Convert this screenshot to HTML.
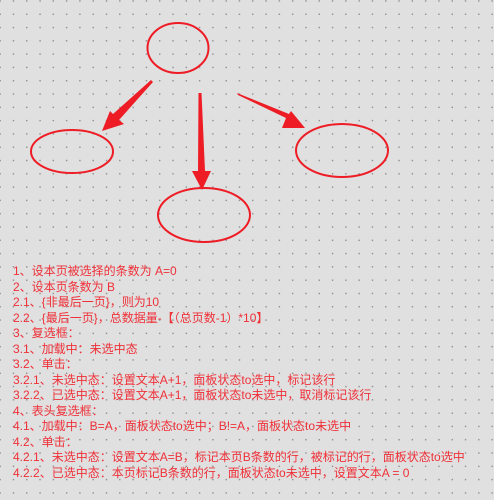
<!DOCTYPE html>
<html><head><meta charset="utf-8"><style>
html,body{margin:0;padding:0}
body{width:494px;height:500px;overflow:hidden;background-color:#e0e0e0;
background-image:radial-gradient(circle,#8a8a8a 0.6px,transparent 0.9px);
background-size:13.3px 13.3px;background-position:6.8px 7.6px;position:relative;
font-family:"Liberation Sans","Noto Sans CJK SC",sans-serif}
svg{position:absolute;left:0;top:0}
.t{position:absolute;left:13px;top:264px;color:#ef3038;font-size:12px;line-height:15.5px;white-space:nowrap}
</style></head><body>
<svg width="494" height="260" viewBox="0 0 494 260">
<g fill="none" stroke="#ee1c25" stroke-width="2">
<ellipse cx="178" cy="48" rx="30.5" ry="25"/>
<ellipse cx="72" cy="151.5" rx="41" ry="21.5"/>
<ellipse cx="204" cy="215" rx="46" ry="27"/>
<ellipse cx="342" cy="150.5" rx="46" ry="26.5"/>
</g>
<g fill="#ee1c25">
<polygon points="151,80 153,82 119,120 124,124 102,131 110,111 113,114"/>
<polygon points="198.5,93 201.5,93 205,171 211,171 202,190 192,171 198,171"/>
<polygon points="237,93 238,95 286,118 282,128 305,128 291,111 289,114"/>
</g>
</svg>
<div class="t">1、设本页被选择的条数为 A=0<br>2、设本页条数为 B<br>2.1、{非最后一页}，则为10<br>2.2、{最后一页}，总数据量-【（总页数-1）*10】<br>3、复选框：<br>3.1、加载中：未选中态<br>3.2、单击：<br>3.2.1、未选中态：设置文本A+1，面板状态to选中，标记该行<br>3.2.2、已选中态：设置文本A+1，面板状态to未选中，取消标记该行<br>4、表头复选框：<br>4.1、加载中：B=A，面板状态to选中；B!=A，面板状态to未选中<br>4.2、单击：<br>4.2.1、未选中态：设置文本A=B，标记本页B条数的行，被标记的行，面板状态to选中<br>4.2.2、已选中态：本页标记B条数的行，面板状态to未选中，设置文本A = 0</div>
</body></html>
